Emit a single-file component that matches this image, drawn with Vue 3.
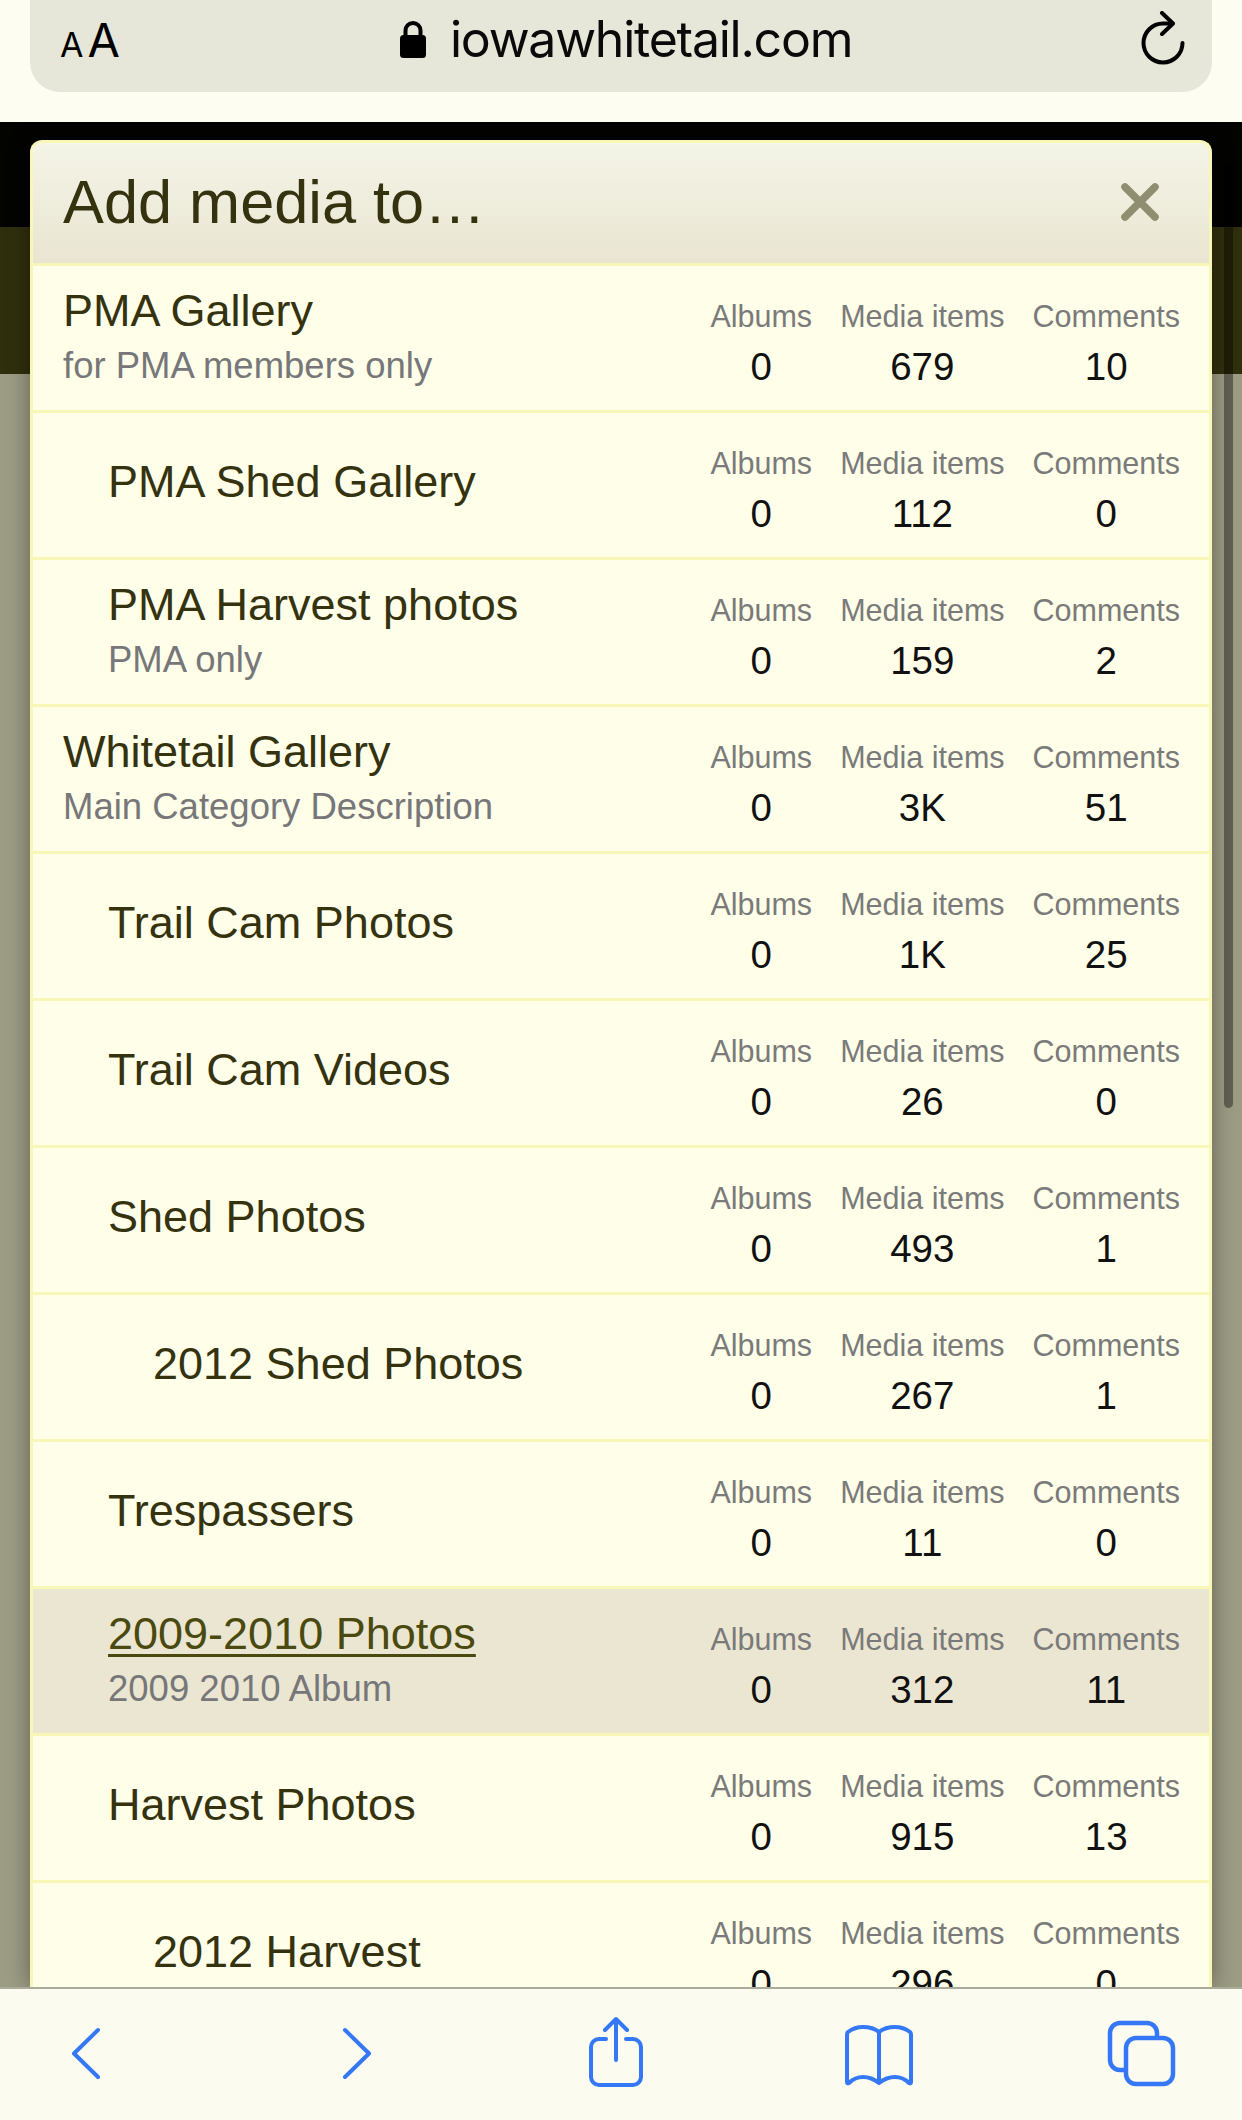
<script setup>
const rows = [
  { name: "PMA Gallery", desc: "for PMA members only", level: 0, albums: "0", media: "679", comments: "10" },
  { name: "PMA Shed Gallery", level: 1, albums: "0", media: "112", comments: "0" },
  { name: "PMA Harvest photos", desc: "PMA only", level: 1, albums: "0", media: "159", comments: "2" },
  { name: "Whitetail Gallery", desc: "Main Category Description", level: 0, albums: "0", media: "3K", comments: "51" },
  { name: "Trail Cam Photos", level: 1, albums: "0", media: "1K", comments: "25" },
  { name: "Trail Cam Videos", level: 1, albums: "0", media: "26", comments: "0" },
  { name: "Shed Photos", level: 1, albums: "0", media: "493", comments: "1" },
  { name: "2012 Shed Photos", level: 2, albums: "0", media: "267", comments: "1" },
  { name: "Trespassers", level: 1, albums: "0", media: "11", comments: "0" },
  { name: "2009-2010 Photos", desc: "2009 2010 Album", level: 1, albums: "0", media: "312", comments: "11", active: true },
  { name: "Harvest Photos", level: 1, albums: "0", media: "915", comments: "13" },
  { name: "2012 Harvest", level: 2, albums: "0", media: "296", comments: "0" },
];
</script>

<template>
  <div class="phone">
    <header class="top-bar">
      <div class="url-bar">
        <div class="text-size"><span class="small-a">A</span><span class="big-a">A</span></div>
        <div class="address">
          <svg class="lock" width="28" height="40" viewBox="0 0 28 40">
            <path d="M6.5 17V11.5a7.5 7.5 0 0 1 15 0V17" fill="none" stroke="#000" stroke-width="4" />
            <rect x="1" y="16" width="26" height="23" rx="3.5" fill="#000" />
          </svg>
          <span class="domain">iowawhitetail.com</span>
        </div>
        <svg class="reload" width="50" height="56" viewBox="0 0 50 56">
          <path d="M44.5 32 A19.5 19.5 0 1 1 25 12.5 H34" fill="none" stroke="#000" stroke-width="4" stroke-linecap="round" />
          <path d="M24 2 L35 12.5 L24 23" fill="none" stroke="#000" stroke-width="4" stroke-linecap="round" stroke-linejoin="round" />
        </svg>
      </div>
    </header>

    <main class="page">
      <div class="band-black"></div>
      <div class="band-olive"></div>
      <div class="band-grey"></div>
      <div class="scroll-thumb"></div>

      <section class="modal">
        <div class="modal-head">
          <h1>Add media to…</h1>
          <svg class="close" width="38" height="38" viewBox="0 0 38 38">
            <path d="M4 4 L34 34 M34 4 L4 34" fill="none" stroke="#8f8e70" stroke-width="7.5" stroke-linecap="round" />
          </svg>
        </div>
        <div
          v-for="r in rows"
          :key="r.name"
          class="row"
          :class="['level-' + r.level, { active: r.active }]"
        >
          <div class="info" :class="{ 'no-desc': !r.desc }">
            <a class="name">{{ r.name }}</a>
            <div v-if="r.desc" class="desc">{{ r.desc }}</div>
          </div>
          <div class="stats">
            <div class="stat">
              <div class="label">Albums</div>
              <div class="value">{{ r.albums }}</div>
            </div>
            <div class="stat">
              <div class="label">Media items</div>
              <div class="value">{{ r.media }}</div>
            </div>
            <div class="stat">
              <div class="label">Comments</div>
              <div class="value">{{ r.comments }}</div>
            </div>
          </div>
        </div>
      </section>
    </main>

    <footer class="tool-bar">
      <svg class="ico back" width="36" height="80" viewBox="0 0 36 80">
        <path d="M30 18 L6 41.5 L30 65" />
      </svg>
      <svg class="ico forward" width="36" height="80" viewBox="0 0 36 80">
        <path d="M6 18 L30 41.5 L6 65" />
      </svg>
      <svg class="ico share" width="62" height="80" viewBox="0 0 62 80">
        <path d="M21 27 H14 a8 8 0 0 0 -8 8 V65 a8 8 0 0 0 8 8 H48 a8 8 0 0 0 8 -8 V35 a8 8 0 0 0 -8 -8 H41" />
        <path d="M31 48 V7 M20 18 L31 7 L42 18" />
      </svg>
      <svg class="ico book" width="76" height="80" viewBox="0 0 76 80">
        <path d="M38 20 C33 16 28 15 22 15 C16 15 11 17 7 20 Q6 21 6 23 V70 Q6 72 8 71 C12 67 17 65 22 65 C28 65 33 67 38 71 C43 67 48 65 54 65 C59 65 64 67 68 71 Q70 72 70 70 V23 Q70 21 69 20 C65 17 60 15 54 15 C48 15 43 16 38 20 Z M38 20 V71" />
      </svg>
      <svg class="ico tabs" width="75" height="80" viewBox="0 0 75 80">
        <rect x="6" y="11" width="47" height="47" rx="10" />
        <rect class="front" x="22" y="26" width="47" height="46" rx="10" />
      </svg>
    </footer>
  </div>
</template>

<style>
html,
body {
  margin: 0;
  overflow: hidden;
}
</style>

<style scoped>
.phone {
  width: 1242px;
  height: 2120px;
  display: flex;
  flex-direction: column;
  overflow: hidden;
  font-family: "Liberation Sans", Arial, sans-serif;
}

.top-bar {
  height: 122px;
  flex: none;
  box-sizing: border-box;
  padding: 0 30px;
  background: #fdfdf2;
}

.url-bar {
  height: 92px;
  box-sizing: border-box;
  padding-bottom: 14px;
  display: grid;
  grid-template-columns: 369px auto 1fr;
  align-items: center;
  background: #e6e7d9;
  border-radius: 0 0 30px 30px;
}

.text-size {
  padding-left: 30px;
  color: #000;
  font-family: Inter, sans-serif;
  line-height: 1;
  display: flex;
  align-items: baseline;
  gap: 4px;
}

.small-a {
  font-size: 34px;
}

.big-a {
  font-size: 47px;
}

.address {
  display: flex;
  align-items: center;
  gap: 23px;
}

.domain {
  font-family: Inter, sans-serif;
  font-size: 50px;
  letter-spacing: -1.25px;
  color: #0a0a0a;
  line-height: 60px;
}

.reload {
  justify-self: end;
  margin-right: 24px;
}

.page {
  flex: 1;
  position: relative;
  display: flex;
  flex-direction: column;
  overflow: hidden;
}

.band-black {
  height: 105px;
  background: #030300;
}

.band-olive {
  height: 147px;
  background: #302f0d;
}

.band-grey {
  flex: 1;
  background: #9c9c84;
}

.scroll-thumb {
  position: absolute;
  left: 1224px;
  top: 43px;
  width: 9px;
  height: 943px;
  border-radius: 5px;
  background: rgba(0, 0, 0, 0.38);
}

.modal {
  position: absolute;
  top: 18px;
  left: 30px;
  right: 30px;
  bottom: 0;
  box-sizing: border-box;
  border: 3px solid #f8f7b8;
  border-bottom: 0;
  border-radius: 12px 12px 0 0;
  background: #fefee9;
  overflow: hidden;
  box-shadow: 0 0 22px rgba(0, 0, 0, 0.4);
}

.modal-head {
  height: 118px;
  display: flex;
  align-items: center;
  justify-content: space-between;
  padding: 0 50px 2px 30px;
  background: linear-gradient(#f4f4e7, #e9e5d1);
  border-bottom: 3px solid #f8f7b8;
}

.modal-head h1 {
  margin: 0;
  font-size: 61.3px;
  font-weight: 400;
  color: #35320f;
}

.row {
  height: 144px;
  display: flex;
  align-items: center;
  justify-content: space-between;
  border-bottom: 3px solid #f8f7b8;
}

.row.active {
  background: #ebe6d1;
}

.level-0 .info {
  padding-left: 30px;
}

.level-1 .info {
  padding-left: 75px;
}

.level-2 .info {
  padding-left: 120px;
}

.info.no-desc {
  padding-bottom: 8px;
}

.name {
  display: block;
  font-size: 45px;
  line-height: 55px;
  color: #35320f;
}

.active .name {
  color: #4a4a10;
  text-decoration: underline;
  text-decoration-thickness: 3px;
  text-underline-offset: 5px;
}

.desc {
  font-size: 36.5px;
  line-height: 55px;
  color: #77777a;
}

.stats {
  display: flex;
  gap: 28px;
  padding: 7px 29px 0 0;
}

.stat {
  text-align: center;
}

.label {
  font-size: 30.5px;
  line-height: 50px;
  color: #7a7a7a;
}

.value {
  font-size: 38.5px;
  line-height: 51px;
  color: #111;
}

.tool-bar {
  height: 133px;
  flex: none;
  box-sizing: border-box;
  display: flex;
  align-items: flex-start;
  padding-top: 23px;
  background: #fbfbf0;
  border-top: 2px solid #a9ab9c;
}

.ico {
  fill: none;
  stroke: #3478f6;
  stroke-width: 4;
  stroke-linecap: round;
  stroke-linejoin: round;
  flex: none;
}

.back {
  margin-left: 68px;
}

.forward {
  margin-left: 235px;
}

.share {
  margin-left: 210px;
}

.book {
  margin-left: 194px;
}

.tabs {
  margin-left: 187px;
  stroke-width: 4.5;
}

.tabs .front {
  fill: #fbfbf0;
}
</style>
